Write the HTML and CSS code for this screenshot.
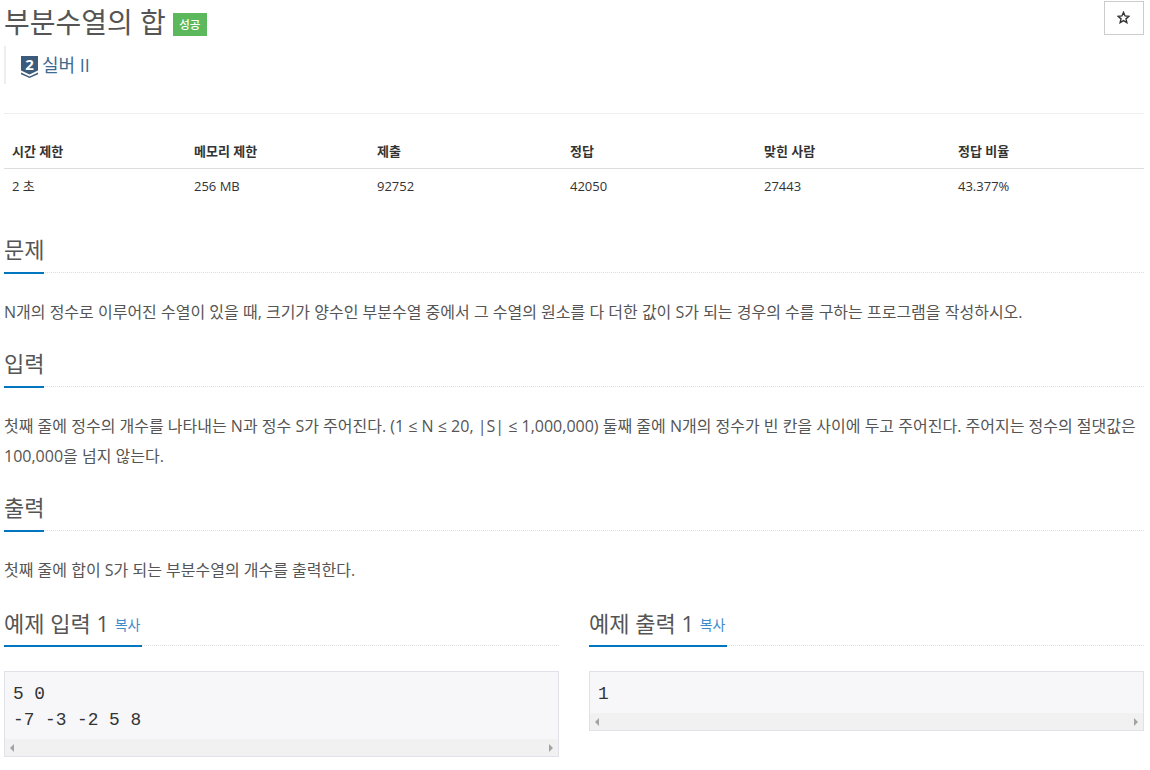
FILE: index.html
```html
<!DOCTYPE html>
<html lang="ko">
<head>
<meta charset="utf-8">
<title>부분수열의 합</title>
<link rel="stylesheet" href="styles.css">
</head>
<body>
<div class="page">
  <header class="title-row">
    <h1 class="title">부분수열의 합</h1>
    <span class="badge">성공</span>
    <button class="star-btn" aria-label="즐겨찾기">
      <svg class="star" width="13" height="13" viewBox="0 0 24 24"><path d="M12 2.5l2.9 6.6 7.1.7-5.4 4.7 1.6 7-6.2-3.7-6.2 3.7 1.6-7L2 9.800l7.100-.7z" fill="none" stroke="#333" stroke-width="2.600"/></svg>
    </button>
  </header>
  <blockquote class="tier">
    <svg class="tier-icon" width="17" height="22" viewBox="0 0 17 22"><path d="M0 0h17v14.500l-8.500 4-8.500-4z" fill="#3c5a7a"/><path d="M0 16.500l8.500 4 8.500-4v1.800l-8.500 3.700-8.500-3.700z" fill="#3c5a7a"/><text x="8.500" y="13.500" class="tier-num">2</text></svg>
    <span class="tier-name">실버 II</span>
  </blockquote>
  <hr class="rule">
  <table class="info">
    <thead>
      <tr><th class="c1">시간 제한</th><th class="c2">메모리 제한</th><th class="c3">제출</th><th class="c4">정답</th><th class="c5">맞힌 사람</th><th>정답 비율</th></tr>
    </thead>
    <tbody>
      <tr><td>2 초</td><td>256 MB</td><td>92752</td><td>42050</td><td>27443</td><td>43.377%</td></tr>
    </tbody>
  </table>
  <section class="sec sec-problem">
    <div class="head"><h2>문제</h2></div>
    <p class="text">N개의 정수로 이루어진 수열이 있을 때, 크기가 양수인 부분수열 중에서 그 수열의 원소를 다 더한 값이 S가 되는 경우의 수를 구하는 프로그램을 작성하시오.</p>
  </section>
  <section class="sec">
    <div class="head"><h2>입력</h2></div>
    <p class="text">첫째 줄에 정수의 개수를 나타내는 N과 정수 S가 주어진다. (1 ≤ N ≤ 20, |S| ≤ 1,000,000) 둘째 줄에 N개의 정수가 빈 칸을 사이에 두고 주어진다. 주어지는 정수의 절댓값은 100,000을 넘지 않는다.</p>
  </section>
  <section class="sec">
    <div class="head"><h2>출력</h2></div>
    <p class="text">첫째 줄에 합이 S가 되는 부분수열의 개수를 출력한다.</p>
  </section>
  <div class="samples">
    <section class="sample">
      <div class="head"><h2>예제 입력 1 <a class="copy">복사</a></h2></div>
      <div class="code">
        <pre>5 0
-7 -3 -2 5 8</pre>
        <div class="scrollbar"><i class="arrow left"></i><i class="arrow right"></i></div>
      </div>
    </section>
    <section class="sample">
      <div class="head"><h2>예제 출력 1 <a class="copy">복사</a></h2></div>
      <div class="code">
        <pre>1</pre>
        <div class="scrollbar"><i class="arrow left"></i><i class="arrow right"></i></div>
      </div>
    </section>
  </div>
</div>
</body>
</html>
```
FILE: styles.css
```css
* { box-sizing: border-box; }
html, body { margin: 0; padding: 0; background: #fff; }
body {
  font-family: "Open Sans", "Noto Sans CJK KR", sans-serif;
  font-size: 14px;
  color: #333;
  overflow: hidden;
  height: 770px;
}
.page { margin: 0 6px 0 4px; }
.title-row { display: flex; align-items: flex-start; height: 46px; }
.title { margin: 0; font-size: 28px; font-weight: 400; line-height: 38px; color: #555; height: 38px; margin-top: 3px; }
.badge {
  margin: 13px 0 0 7px; width: 34px; height: 23px; background: #5cb85c; color: #fff;
  font-size: 11.500px; font-weight: 500; line-height: 24px; text-align: center;
}
.star-btn {
  margin: 1px 0 0 auto; width: 40px; height: 34px; padding: 0 1px 1px 0; background: #fff;
  border: 1px solid #ccc; display: flex; align-items: center; justify-content: center;
}
.tier {
  margin: 0; height: 38px; border-left: 2px solid #eee; padding-left: 15px;
  display: flex; align-items: center; color: #3e6a90; font-size: 18px;
}
.tier-icon { margin: 4px 4px 0 0; overflow: visible; }
.tier-num { font: 700 15px "Open Sans", sans-serif; fill: #fff; text-anchor: middle; }
.tier-name { line-height: 38px; }
.rule { border: 0; border-top: 1px solid #eee; margin: 29px 0 0; height: 0; }
.info { width: 100%; border-collapse: collapse; table-layout: fixed; margin-top: 20px; font-size: 13px; }
.info th { text-align: left; padding: 8px 8px 6px; height: 34px; font-weight: 700; border-bottom: 1px solid #ddd; line-height: 19px; }
.info td { padding: 8px; height: 37px; line-height: 19px; }
.c1 { width: 182px; } .c2 { width: 183px; } .c3 { width: 193px; } .c4 { width: 194px; } .c5 { width: 194px; }
.sec-problem { margin-top: 29px; }
.head { border-bottom: 1px dotted #ddd; height: 39px; }
.head h2 {
  display: inline-block; margin: 0; height: 40px; font-size: 22px; font-weight: 400; line-height: 30px;
  color: #555; border-bottom: 2px solid #0076c0;
}
.text { margin: 24px 0 0; font-size: 16px; line-height: 30px; color: #555; padding-bottom: 21px; }
.samples { display: grid; grid-template-columns: 555px 555px; column-gap: 30px; margin-top: 1px; }
.sample .head h2 { line-height: 32px; padding-right: 2px; }
.copy { font-size: 14px; color: #428bca; vertical-align: 2px; }
.code { margin-top: 25px; border: 1px solid #e1e1e8; background: #f7f7f9; }
.code pre {
  margin: 0; padding: 9px 9px 6px 8px; font: 17.800px/26px "Liberation Mono", monospace; color: #333;
}
.scrollbar { height: 17px; background: #f1f1f1; display: flex; justify-content: space-between; align-items: center; padding: 0 5px; }
.arrow { width: 0; height: 0; border-top: 4px solid transparent; border-bottom: 4px solid transparent; }
.arrow.left { border-right: 4px solid #a3a3a3; }
.arrow.right { border-left: 4px solid #a3a3a3; }
```
